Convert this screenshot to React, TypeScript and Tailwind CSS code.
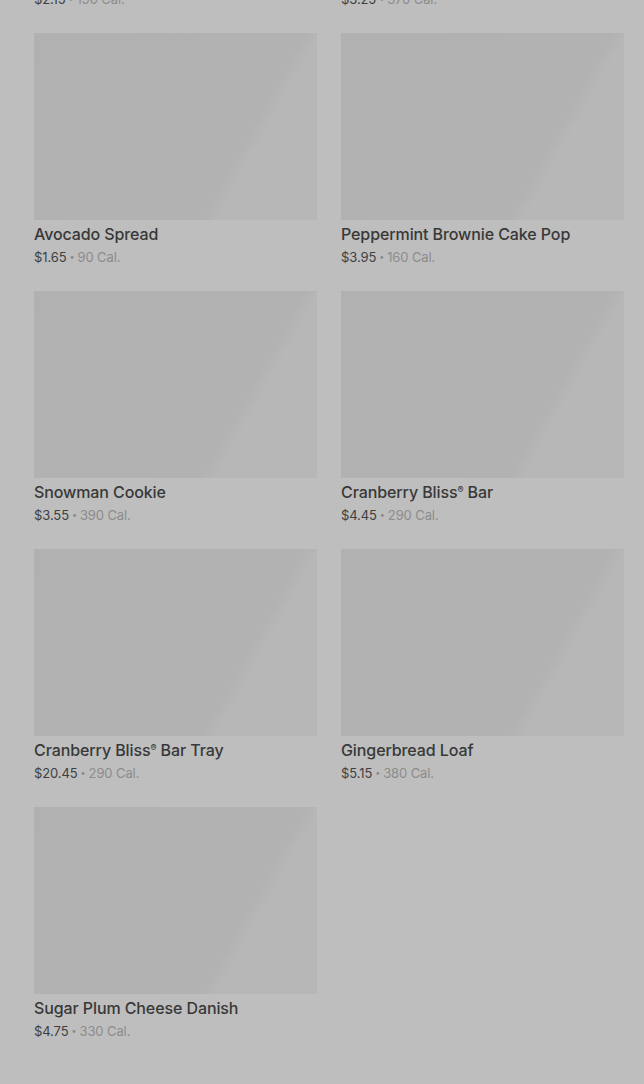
import React from "react";

type Item = { name: string; price: string; cal: string };

const items: Item[] = [
  { name: "Butter Croissant", price: "$2.15", cal: "190 Cal." },
  { name: "Chocolate Croissant", price: "$3.25", cal: "370 Cal." },
  { name: "Avocado Spread", price: "$1.65", cal: "90 Cal." },
  { name: "Peppermint Brownie Cake Pop", price: "$3.95", cal: "160 Cal." },
  { name: "Snowman Cookie", price: "$3.55", cal: "390 Cal." },
  { name: "Cranberry Bliss® Bar", price: "$4.45", cal: "290 Cal." },
  { name: "Cranberry Bliss® Bar Tray", price: "$20.45", cal: "290 Cal." },
  { name: "Gingerbread Loaf", price: "$5.15", cal: "380 Cal." },
  { name: "Sugar Plum Cheese Danish", price: "$4.75", cal: "330 Cal." },
];

function Name({ text }: { text: string }) {
  const parts = text.split("®");
  if (parts.length === 1) return <>{text}</>;
  return (
    <>
      {parts[0]}
      <span className="relative top-[-5px] text-[9px] leading-none">®</span>
      {parts[1]}
    </>
  );
}

function Card({ item }: { item: Item }) {
  return (
    <div className="flex flex-col">
      <div className="h-[187px] w-full bg-[linear-gradient(119deg,#b1b1b1_0%,#b2b2b2_70%,#b7b7b7_74%,#b7b7b7_100%)]" />
      <div className="mt-[2px] text-[16px] leading-[24px] font-[450] text-[#383838] tracking-[-0.1px]">
        <Name text={item.name} />
      </div>
      <div className="mt-[1px] flex items-center text-[13px] leading-[20px] text-[#3f3f3f] tracking-[-0.1px]">
        <span>{item.price}</span>
        <span className="mx-[3px] text-[9px] text-[#8a8a8a]">•</span>
        <span className="text-[#8c8c8c]">{item.cal}</span>
      </div>
    </div>
  );
}

export default function App() {
  return (
    <div
      className="min-h-screen w-full overflow-hidden bg-[#bebebe]"
      style={{ fontFamily: "Inter, 'Noto Sans', sans-serif" }}
    >
      <div className="mt-[-225px] grid grid-cols-[283px_283px] gap-x-[24px] gap-y-[24px] pl-[34px]">
        {items.map((it) => (
          <Card key={it.name} item={it} />
        ))}
      </div>
    </div>
  );
}
